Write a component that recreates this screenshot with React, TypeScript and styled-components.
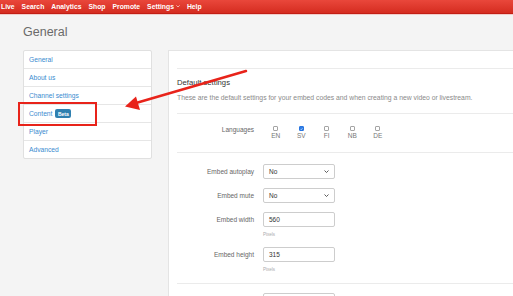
import React from "react";
import styled, { createGlobalStyle } from "styled-components";

const GlobalStyle = createGlobalStyle`
  body {
    margin: 0;
    background: #f4f4f4;
    font-family: "Liberation Sans", Arial, sans-serif;
  }
`;

const Root = styled.div`
  position: relative;
  width: 513px;
  height: 296px;
  overflow: hidden;
  background: #f4f4f4;
`;

const NavBar = styled.nav`
  height: 13px;
  display: flex;
  align-items: center;
  gap: 7px;
  padding-left: 1px;
  background: linear-gradient(#e9473b, #d52c20);
  border-bottom: 1px solid #c21e14;
  box-shadow: 0 1px 0 #f1cdca;
`;

const NavLink = styled.span`
  color: #fff;
  font-size: 6.8px;
  font-weight: bold;
  display: flex;
  align-items: center;
  gap: 2px;
`;

const Main = styled.div`
  padding: 10px 0 0 23px;
`;

const PageTitle = styled.h1`
  margin: 0;
  height: 16px;
  font-size: 12.5px;
  line-height: 16px;
  font-weight: normal;
  color: #6a6a6a;
`;

const Columns = styled.div`
  display: flex;
  gap: 16px;
  margin-top: 10px;
`;

const SideNav = styled.ul`
  list-style: none;
  margin: 0;
  padding: 0;
  width: 127px;
  background: #fff;
  border: 1px solid #e0e0e0;
  border-radius: 2px;
  align-self: flex-start;
`;

const SideItem = styled.li`
  height: 17px;
  display: flex;
  align-items: center;
  gap: 3px;
  padding-left: 5px;
  font-size: 6.7px;
  color: #3b8bcf;
  border-bottom: 1px solid #e6e6e6;
  &:last-child {
    border-bottom: none;
  }
`;

const Badge = styled.span`
  background: #2f80b0;
  color: #fff;
  font-size: 5px;
  font-weight: bold;
  padding: 1.5px 2.5px;
  border-radius: 2px;
`;

const Panel = styled.section`
  flex: 1;
  height: 260px;
  background: #fff;
  border: 1px solid #e4e4e4;
  border-right: none;
  padding: 17px 0 0 8px;
`;

const Divider = styled.div`
  height: 1px;
  background: #ebebeb;
`;

const SectionTitle = styled.h2`
  margin: 9px 0 0;
  font-size: 7.7px;
  line-height: 10px;
  font-weight: normal;
  color: #333;
`;

const SectionText = styled.p`
  margin: 6px 0 11px;
  font-size: 6.8px;
  line-height: 8px;
  color: #8a8a8a;
  white-space: nowrap;
`;

const Section = styled.div<{ $top: number; $bottom: number }>`
  padding: ${(p) => p.$top}px 0 ${(p) => p.$bottom}px;
  display: flex;
  flex-direction: column;
`;

const FormRow = styled.div<{ $gap?: number }>`
  display: grid;
  grid-template-columns: 77px 1fr;
  column-gap: 9px;
  align-items: start;
  margin-bottom: ${(p) => p.$gap ?? 0}px;
`;

const Label = styled.label<{ $lh?: number }>`
  text-align: right;
  font-size: 6.5px;
  line-height: ${(p) => p.$lh ?? 15}px;
  color: #666;
`;

const LangList = styled.div`
  display: flex;
`;

const LangItem = styled.div`
  width: 25.5px;
  display: flex;
  flex-direction: column;
  align-items: center;
  font-size: 6.5px;
  line-height: 9px;
  color: #777;
`;

const Check = styled.span<{ $on?: boolean }>`
  width: 5px;
  height: 5px;
  box-sizing: border-box;
  border: 1px solid ${(p) => (p.$on ? "#2a76e0" : "#a5a5a5")};
  border-radius: 1px;
  background: ${(p) => (p.$on ? "#2f7ee6" : "#fff")};
  display: flex;
  align-items: center;
  justify-content: center;
`;

const Field = styled.div`
  width: 72px;
  height: 15px;
  box-sizing: border-box;
  border: 1px solid #cdcdcd;
  border-radius: 2px;
  padding: 0 5px;
  display: flex;
  align-items: center;
  justify-content: space-between;
  font-size: 6.5px;
  color: #333;
  background: #fff;
`;

const Help = styled.div`
  margin-top: 4px;
  font-size: 4.5px;
  line-height: 8px;
  color: #aaa;
`;

const Highlight = styled.div`
  position: absolute;
  left: 18px;
  top: 102px;
  width: 79px;
  height: 24px;
  box-sizing: border-box;
  border: 2px solid #e8231a;
`;

const ArrowSvg = styled.svg`
  position: absolute;
  left: 0;
  top: 0;
  pointer-events: none;
`;

const Chevron = ({ size = 5, color = "#333" }: { size?: number; color?: string }) => (
  <svg width={size} height={size * 0.6} viewBox="0 0 10 6">
    <path d="M1 1l4 4 4-4" fill="none" stroke={color} strokeWidth="1.6" />
  </svg>
);

const languages = [
  { code: "EN", on: false },
  { code: "SV", on: true },
  { code: "FI", on: false },
  { code: "NB", on: false },
  { code: "DE", on: false },
];

export default function App() {
  return (
    <Root>
      <GlobalStyle />
      <NavBar>
        <NavLink>Live</NavLink>
        <NavLink>Search</NavLink>
        <NavLink>Analytics</NavLink>
        <NavLink>Shop</NavLink>
        <NavLink>Promote</NavLink>
        <NavLink>
          Settings <Chevron size={4} color="#fff" />
        </NavLink>
        <NavLink>Help</NavLink>
      </NavBar>
      <Main>
        <PageTitle>General</PageTitle>
        <Columns>
          <SideNav>
            <SideItem>General</SideItem>
            <SideItem>About us</SideItem>
            <SideItem>Channel settings</SideItem>
            <SideItem>
              Content <Badge>Beta</Badge>
            </SideItem>
            <SideItem>Player</SideItem>
            <SideItem>Advanced</SideItem>
          </SideNav>
          <Panel>
            <Divider />
            <SectionTitle>Default settings</SectionTitle>
            <SectionText>
              These are the default settings for your embed codes and when creating a new video or livestream.
            </SectionText>
            <Divider />
            <Section $top={12} $bottom={12}>
              <FormRow>
                <Label $lh={8}>Languages</Label>
                <LangList>
                  {languages.map((l) => (
                    <LangItem key={l.code}>
                      <Check $on={l.on}>
                        {l.on && (
                          <svg width="4" height="4" viewBox="0 0 8 8">
                            <path d="M1.5 4.2l1.8 1.8 3.4-4" fill="none" stroke="#fff" strokeWidth="1.5" />
                          </svg>
                        )}
                      </Check>
                      {l.code}
                    </LangItem>
                  ))}
                </LangList>
              </FormRow>
            </Section>
            <Divider />
            <Section $top={11} $bottom={9}>
              <FormRow $gap={9}>
                <Label>Embed autoplay</Label>
                <Field>
                  No <Chevron />
                </Field>
              </FormRow>
              <FormRow $gap={9}>
                <Label>Embed mute</Label>
                <Field>
                  No <Chevron />
                </Field>
              </FormRow>
              <FormRow $gap={8}>
                <Label>Embed width</Label>
                <div>
                  <Field>560</Field>
                  <Help>Pixels</Help>
                </div>
              </FormRow>
              <FormRow>
                <Label>Embed height</Label>
                <div>
                  <Field>315</Field>
                  <Help>Pixels</Help>
                </div>
              </FormRow>
            </Section>
            <Divider />
            <Section $top={9} $bottom={0}>
              <FormRow>
                <span />
                <Field />
              </FormRow>
            </Section>
          </Panel>
        </Columns>
      </Main>
      <Highlight />
      <ArrowSvg width="513" height="296" viewBox="0 0 513 296">
        <line x1="246" y1="71" x2="136" y2="103" stroke="#e8231a" strokeWidth="2.5" strokeLinecap="round" />
        <polygon points="125,106.5 136,96.5 140,110" fill="#e8231a" />
      </ArrowSvg>
    </Root>
  );
}
